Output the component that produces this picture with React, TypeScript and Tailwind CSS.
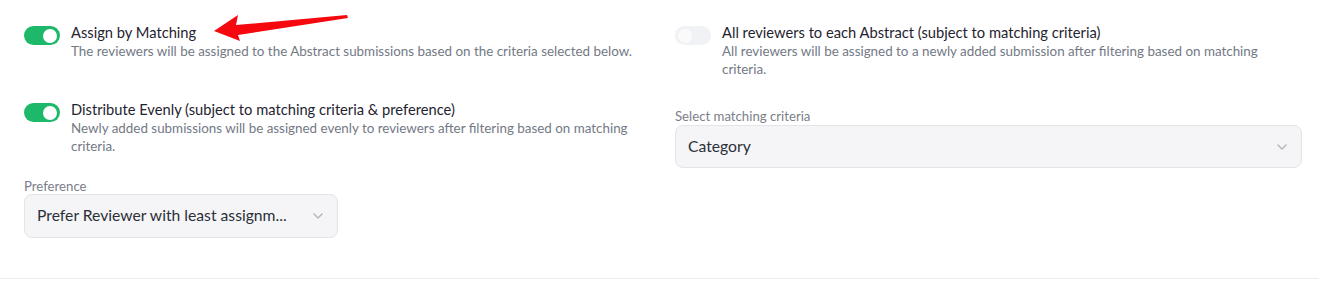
import { ChevronDown } from "lucide-react";

const font = { fontFamily: "Lato, 'Open Sans', sans-serif" };

const Toggle = ({ on }: { on: boolean }) => (
  <div
    className={`mt-[3px] flex h-[19px] w-9 shrink-0 items-center rounded-full px-[3px] ${
      on ? "justify-end bg-[#1db86a]" : "justify-start bg-[#f1f2f5]"
    }`}
  >
    <div className={`h-[14px] w-[14px] rounded-full ${on ? "bg-white" : "bg-[#fafafb]"}`} />
  </div>
);

const Option = ({ on, title, desc }: { on: boolean; title: string; desc: string }) => (
  <div className="flex gap-[11px]">
    <Toggle on={on} />
    <div className="flex flex-col">
      <span className="text-[14.7px] leading-[19px] text-[#1f2430]">{title}</span>
      <span className="text-[13.4px] leading-[18px] text-[#737985]">{desc}</span>
    </div>
  </div>
);

const Select = ({ value, className }: { value: string; className: string }) => (
  <div
    className={`flex items-center justify-between rounded-lg border border-[#e3e4e8] bg-[#f5f5f7] pl-3 pr-[11px] ${className}`}
  >
    <span className="text-[15.7px] text-[#2b2f38]">{value}</span>
    <ChevronDown size={16} strokeWidth={2.2} className="text-[#b5b7bd]" />
  </div>
);

export default function App() {
  return (
    <div style={font} className="relative h-[279px] w-full border-b border-[#ececee] bg-white">
      <div className="grid grid-cols-2 gap-x-6 pl-6 pr-[17px]">
        {/* left column */}
        <div className="flex flex-col">
          <div className="pt-[23px]">
            <Option
              on
              title="Assign by Matching"
              desc="The reviewers will be assigned to the Abstract submissions based on the criteria selected below."
            />
          </div>
          <div className="mt-[40px]">
            <Option
              on
              title="Distribute Evenly (subject to matching criteria & preference)"
              desc="Newly added submissions will be assigned evenly to reviewers after filtering based on matching criteria."
            />
          </div>
          <div className="mt-[23px] text-[13.2px] leading-4 text-[#7b808a]">Preference</div>
          <Select value="Prefer Reviewer with least assignm..." className="h-11 w-[314px]" />
        </div>

        {/* right column */}
        <div className="flex flex-col">
          <div className="pt-[23px]">
            <Option
              on={false}
              title="All reviewers to each Abstract (subject to matching criteria)"
              desc="All reviewers will be assigned to a newly added submission after filtering based on matching criteria."
            />
          </div>
          <div className="mt-[30px] text-[13.2px] leading-4 text-[#7b808a]">Select matching criteria</div>
          <Select value="Category" className="mt-px h-[43px] w-full" />
        </div>
      </div>

      {/* annotation arrow */}
      <svg className="absolute left-[210px] top-[10px]" width="142" height="36" viewBox="0 0 142 36">
        <polygon points="4,21 28,5 26,15 137,5 138,8 28,25 30,31" fill="#f5090f" />
      </svg>
    </div>
  );
}
